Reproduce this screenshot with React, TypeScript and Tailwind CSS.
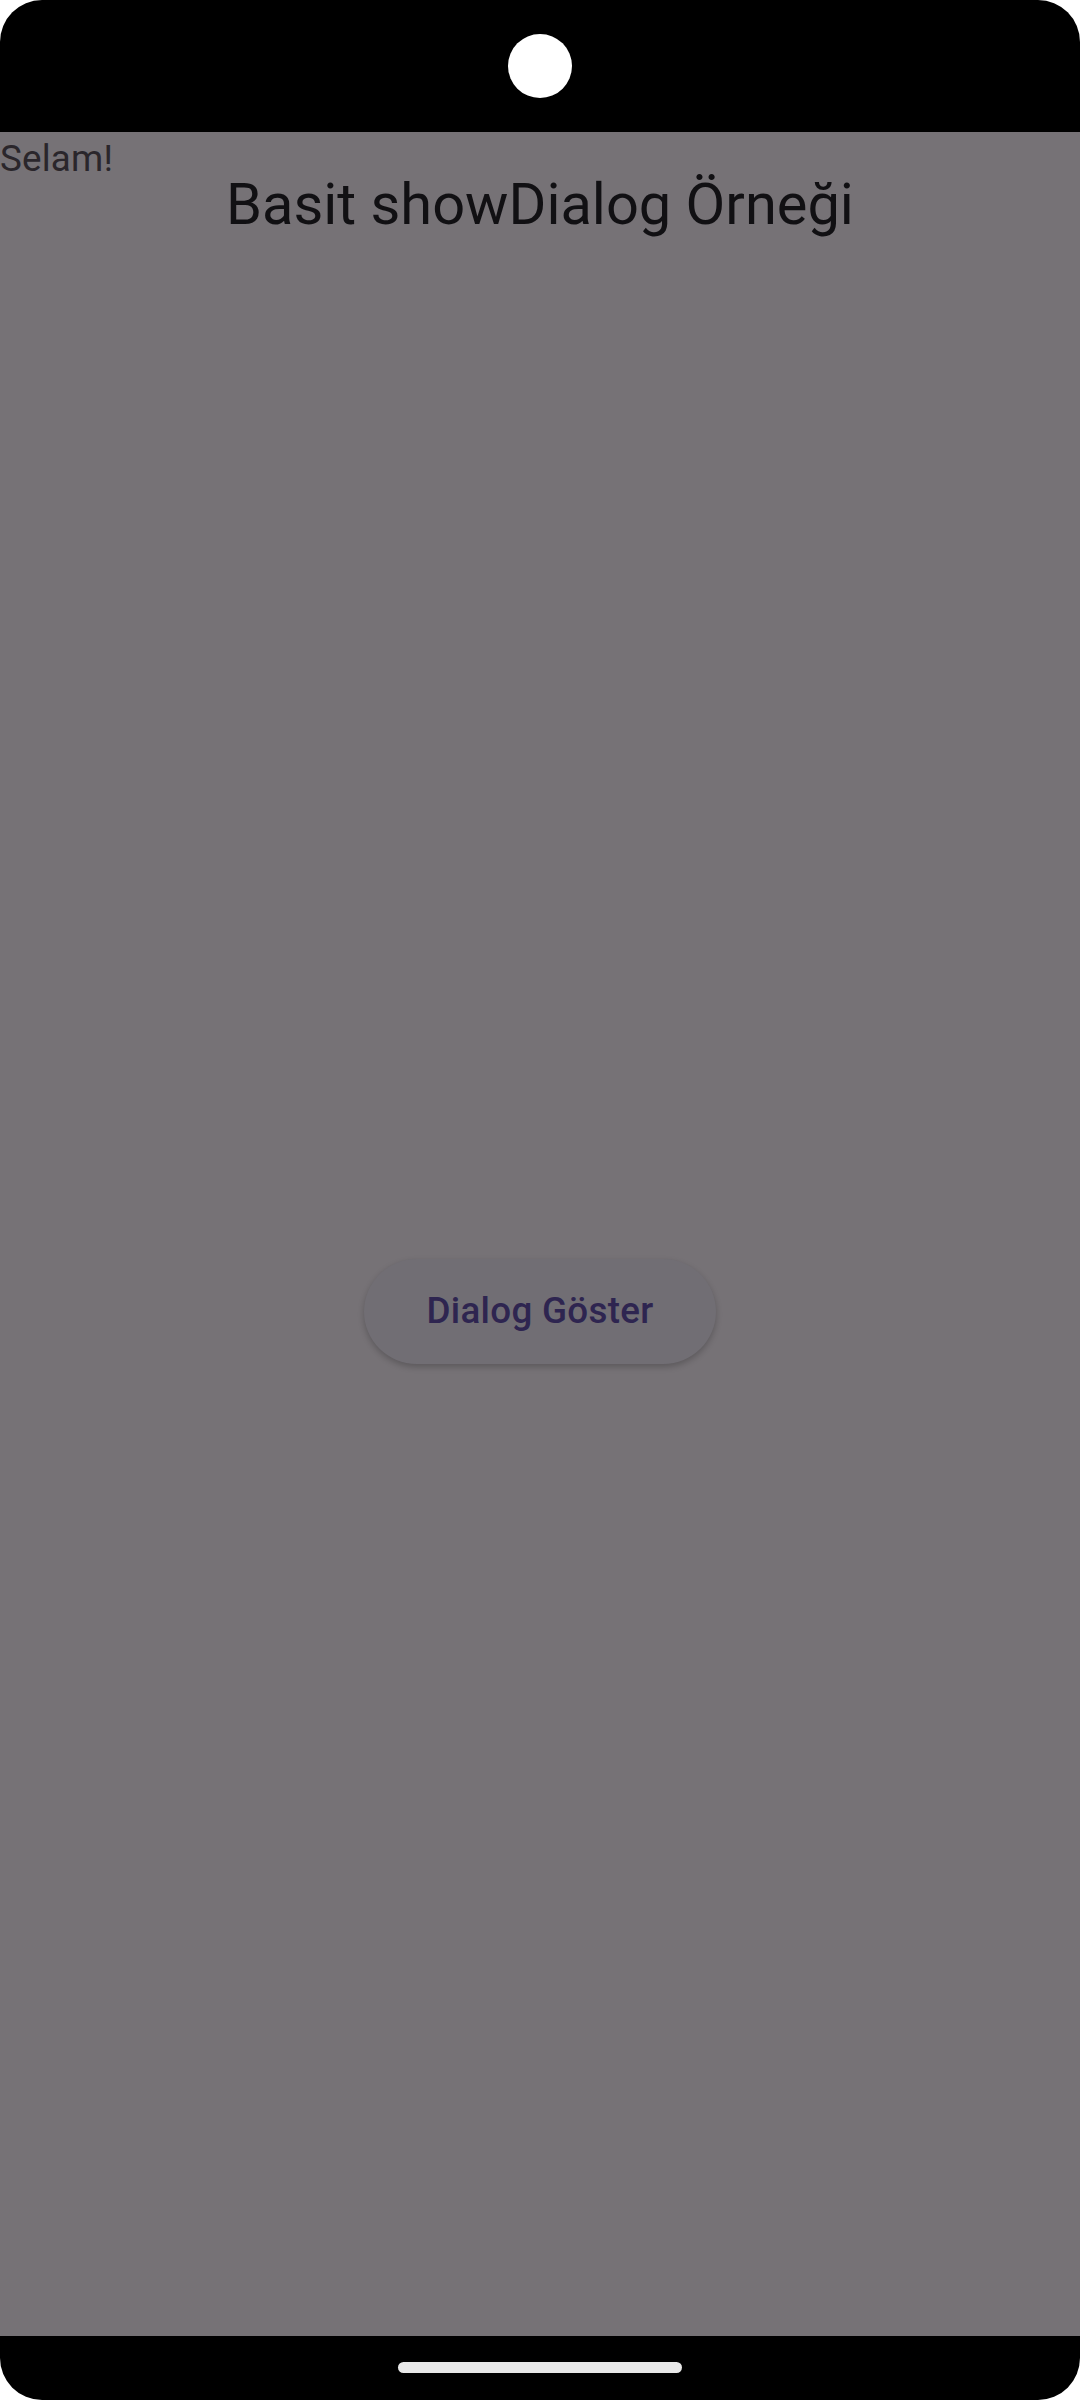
const App = () => {
  return (
    <div className="w-[1080px] h-[2400px] bg-white">
      <div
        className="flex h-full w-full flex-col overflow-hidden rounded-[42px] bg-black"
        style={{ fontFamily: "Roboto, 'Noto Sans', sans-serif" }}
      >
        {/* status bar with camera cutout */}
        <div className="flex h-[132px] shrink-0 items-center justify-center">
          <div className="h-[64px] w-[64px] rounded-full bg-white" />
        </div>

        {/* dimmed app content */}
        <div className="flex flex-1 flex-col bg-[#767276]">
          <div className="pt-[5px] text-[36.75px] leading-[43px] tracking-[0.2px] text-[#2a262b]">
            Selam!
          </div>
          <div className="flex h-[90px] items-start justify-center">
            <h1 className="text-[57.75px] leading-[48px] text-[#111013]">
              Basit showDialog Örneği
            </h1>
          </div>
          <div className="flex flex-1 items-center justify-center pt-[16px]">
            <button className="flex h-[105px] w-[352px] items-center justify-center rounded-full bg-[#716e74] text-[36.75px] font-medium tracking-[0.3px] text-[#2e2550] shadow-[0_3px_6px_rgba(0,0,0,0.22)]">
              Dialog Göster
            </button>
          </div>
        </div>

        {/* navigation bar */}
        <div className="flex h-[64px] shrink-0 items-start justify-center pt-[26px]">
          <div className="h-[11px] w-[284px] rounded-full bg-[#e8e8e8]" />
        </div>
      </div>
    </div>
  );
};

export default App;
